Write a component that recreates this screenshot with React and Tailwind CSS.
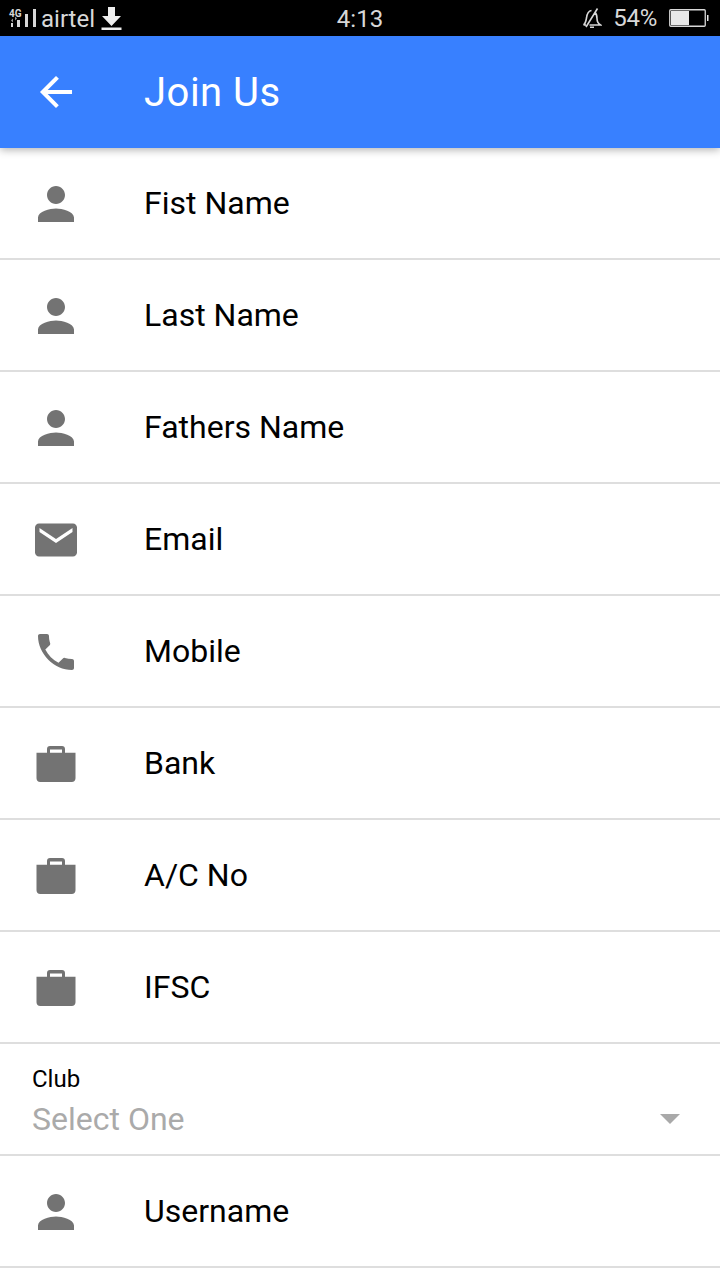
const icons = {
  back: 'M427 234.625H167.296l119.702-119.702L256 85 85 256l171 171 29.922-29.924-118.626-119.701H427v-42.75z',
  person:
    'M256 256c52.805 0 96-43.201 96-96s-43.195-96-96-96-96 43.201-96 96 43.195 96 96 96zm0 48c-63.598 0-192 32.402-192 96v48h384v-48c0-63.598-128.402-96-192-96z',
  mail: 'M437.332 80H74.668C51.199 80 32 99.198 32 122.667v266.666C32 412.802 51.199 432 74.668 432h362.664C460.801 432 480 412.802 480 389.333V122.667C480 99.198 460.801 80 437.332 80zM432 170.667L256 288 80 170.667V128l176 117.333L432 128v42.667z',
  call: 'M426.666 330.667a250.385 250.385 0 0 1-75.729-11.729c-7.469-2.136-16-1.073-21.332 5.333l-46.939 46.928c-60.802-30.928-109.864-80-140.802-140.803l46.939-46.927c5.332-5.333 7.462-13.864 5.332-21.333-8.537-24.531-12.802-48.136-12.802-76.803C181.333 73.604 171.734 64 160 64H85.333C73.599 64 64 73.604 64 85.333 64 274.656 237.344 448 426.666 448 438.4 448 448 438.396 448 426.667v-74.667c0-11.729-9.6-21.333-21.334-21.333z',
  briefcase:
    'M352 136V96c0-20-12-32-32-32H192c-20 0-32 12-32 32v40H48v272c0 24 16 40 40 40h336c24 0 40-16 40-40V136H352zM320 136H192v-36h128v36z',
}

const fields = [
  { label: 'Fist Name', icon: 'person' },
  { label: 'Last Name', icon: 'person' },
  { label: 'Fathers Name', icon: 'person' },
  { label: 'Email', icon: 'mail' },
  { label: 'Mobile', icon: 'call' },
  { label: 'Bank', icon: 'briefcase' },
  { label: 'A/C No', icon: 'briefcase' },
  { label: 'IFSC', icon: 'briefcase' },
]

function Icon({ name, className = '' }) {
  return (
    <svg viewBox="0 0 512 512" className={`size-12 shrink-0 ${className}`} fill="currentColor">
      <path d={icons[name]} />
    </svg>
  )
}

function StatusBar() {
  return (
    <div className="grid h-9 grid-cols-3 items-center bg-black text-2xl text-[#d8d8d8]">
      <div className="flex items-center pl-2">
        <svg width="30" height="24" viewBox="0 0 30 24" fill="currentColor" className="mr-[3px]">
          <text x="1" y="11" fontSize="10" fontWeight="700">4G</text>
          <path d="M3 17h2v4H3zM9 14h3v7H9zM17 8h3v13h-3zM25 3h3v18h-3z" />
          <path d="M3 14.500l2-2v4zM9 12.500l-2 2v-4z" opacity="0.7" />
        </svg>
        <span className="pt-0.5 leading-none">airtel</span>
        <svg width="22" height="24" viewBox="0 0 22 24" fill="#eeeeee" className="ml-1.5">
          <path d="M7 1h7v9h6l-9.500 10L1 10h6zM0.500 21.500h20V24h-20z" />
        </svg>
      </div>
      <span className="pt-0.5 text-center leading-none">4:13</span>
      <div className="flex items-center justify-end pr-[10px]">
        <svg width="20" height="22" viewBox="0 0 20 22" fill="none" stroke="currentColor" strokeWidth="1.6">
          <path d="M1.500 18c2-1.500 2.500-4 3-7 .5-4.500 1.500-7 5-7.500M12.500 5c2 1.500 2.500 4 2.500 6.500s1 5 3.500 6.500H7.500M1.500 18H4M8 20.300h4M15.500 1.500L4 20" />
        </svg>
        <span className="ml-[11px] leading-none tracking-[-0.3px]">54%</span>
        <svg width="41" height="20" viewBox="0 0 41 20" className="ml-3">
          <rect x="0.750" y="1.750" width="35.500" height="16.500" rx="1" fill="none" stroke="#d8d8d8" strokeWidth="1.300" />
          <path d="M2 3h18v14H2zM38 7h1.500v6H38z" fill="#e8e8e8" />
        </svg>
      </div>
    </div>
  )
}

function Field({ label, icon }) {
  return (
    <div className="flex h-28 items-center border-b-2 border-[#dedede] pl-8">
      <Icon name={icon} className="mt-0.5 text-[#737373]" />
      <span className="ml-16 text-[32px] leading-10">{label}</span>
    </div>
  )
}

function App() {
  return (
    <div className="h-[1280px] w-[720px] overflow-hidden bg-white font-[Roboto,sans-serif] text-black">
      <StatusBar />
      <header className="relative flex h-28 items-center bg-[#3880ff] pl-8 text-white shadow-[0_2px_8px_rgba(0,0,0,0.3)]">
        <Icon name="back" />
        <h1 className="ml-16 pt-0.5 text-[40px] leading-none tracking-[0.5px]">Join Us</h1>
      </header>
      {fields.map((field) => (
        <Field key={field.label} {...field} />
      ))}
      {/* Club select */}
      <div className="flex h-28 items-end justify-between border-b-2 border-[#dedede] pr-10 pb-[15px] pl-8">
        <div>
          <div className="text-2xl leading-8">Club</div>
          <div className="mt-1 text-[32px] leading-10 text-[#aaaaaa]">Select One</div>
        </div>
        <svg width="20" height="10" viewBox="0 0 20 10" className="mb-[15px]" fill="#a9a9a9">
          <path d="M0 0h20L10 10z" />
        </svg>
      </div>
      <Field label="Username" icon="person" />
    </div>
  )
}

export default App
